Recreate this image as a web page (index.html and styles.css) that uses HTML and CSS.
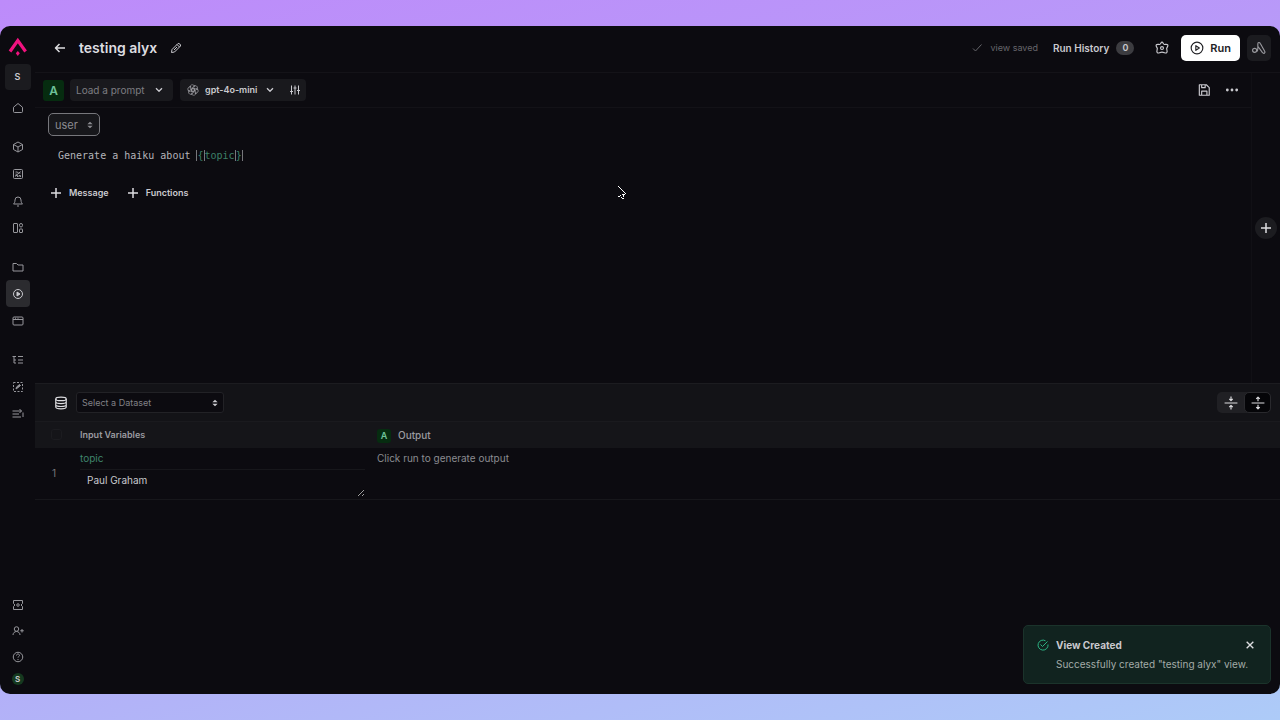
FILE: index.html
```html
<!DOCTYPE html>
<html lang="en">
<head>
    <meta charset="UTF-8">
    <meta name="viewport" content="width=device-width, initial-scale=1.0">
    <title>testing alyx</title>
    <link rel="stylesheet" href="styles.css">
</head>
<body>
<div class="window">
    <aside class="sidebar">
        <a class="logo" href="#" aria-label="Home page">
            <svg width="20" height="20" viewBox="0 0 20 20"><path d="M2 14.500 9.800 3.500l7.800 11" fill="none" stroke="#f0127f" stroke-width="3.200"/><path d="M9.800 14l2 2.200-2 2.800-2-2.800z" fill="#f0127f"/></svg>
        </a>
        <button class="space" type="button">S</button>
        <nav class="side_nav">
            <div class="side_group">
                <a href="#" aria-label="Home"><svg class="icon" viewBox="0 0 24 24"><path d="M3 10.500 12 3l9 7.500V19a2 2 0 0 1-2 2H5a2 2 0 0 1-2-2z"/></svg></a>
            </div>
            <div class="side_group">
                <a href="#" aria-label="Models"><svg class="icon" viewBox="0 0 24 24"><path d="M12 2l9 5v10l-9 5-9-5V7zM3 7l9 5 9-5M12 12v10"/></svg></a>
                <a href="#" aria-label="Dashboards"><svg class="icon" viewBox="0 0 24 24"><rect x="3" y="3" width="18" height="18" rx="2"/><path d="M7 8h4l2 3 4-4M7 12l4 1 2-3h4M7 17v-2h4v3M14 18v-3h3v3"/></svg></a>
                <a href="#" aria-label="Monitors"><svg class="icon" viewBox="0 0 24 24"><path d="M3 18c2-2 3-4 3-8a6 6 0 0 1 12 0c0 4 1 6 3 8zM10 22h4"/></svg></a>
                <a href="#" aria-label="Boards"><svg class="icon" viewBox="0 0 24 24"><rect x="3" y="3" width="8" height="18" rx="1"/><rect x="15" y="3" width="6" height="7" rx="3"/><rect x="15" y="14" width="6" height="7" rx="1"/></svg></a>
            </div>
            <div class="side_group">
                <a href="#" aria-label="Projects"><svg class="icon" viewBox="0 0 24 24"><path d="M2 5h7l3 3h10v12H2z"/></svg></a>
                <a class="active" href="#" aria-label="Playground"><svg class="icon" viewBox="0 0 24 24"><circle cx="12" cy="12" r="9"/><path d="M10 8l6 4-6 4z" fill="currentColor"/></svg></a>
                <a href="#" aria-label="Prompts"><svg class="icon" viewBox="0 0 24 24"><rect x="2" y="4" width="20" height="16" rx="2"/><path d="M2 9h20M6 6.500h2M11 6.500h2"/></svg></a>
            </div>
            <div class="side_group">
                <a href="#" aria-label="Traces"><svg class="icon" viewBox="0 0 24 24"><path d="M1 5h7M4 5v13h4M12 5h10M12 12h10M12 18h10M4 12h4"/></svg></a>
                <a href="#" aria-label="Annotations"><svg class="icon" viewBox="0 0 24 24"><rect x="3" y="3" width="18" height="18" stroke-dasharray="4 3"/><path d="M8 16l1-4 6-5 2 2-6 5z" fill="currentColor"/></svg></a>
                <a href="#" aria-label="Tasks"><svg class="icon" viewBox="0 0 24 24"><path d="M1 6h18M1 12h13M1 18h17M15 2l4 4-4 4M22 9v9"/></svg></a>
            </div>
        </nav>
        <div class="side_bottom">
            <a href="#" aria-label="Billing"><svg class="icon" viewBox="0 0 24 24"><path d="M3 3h18v6l-3 3 3 3v6H3v-6l3-3-3-3z"/><circle cx="12" cy="12" r="2.500"/></svg></a>
            <a href="#" aria-label="Invite"><svg class="icon" viewBox="0 0 24 24"><circle cx="9" cy="8" r="4.500"/><path d="M2 20c0-4 3-7 7-7s7 3 7 7M20 8v7M16.500 11.500h7"/></svg></a>
            <a href="#" aria-label="Help"><svg class="icon" viewBox="0 0 24 24"><circle cx="12" cy="12" r="9.500"/><path d="M9 9c0-4 6-4 6 0 0 2-3 2-3 4M12 16v2"/></svg></a>
            <button class="avatar" type="button">S</button>
        </div>
    </aside>

    <main class="main">
        <header class="header">
            <button class="plain" type="button" aria-label="Back"><svg class="icon bright thick" viewBox="0 0 24 24"><path d="M22 12H3M11 4l-8 8 8 8"/></svg></button>
            <h1>testing alyx</h1>
            <button class="plain" type="button" aria-label="Rename"><svg class="icon" viewBox="0 0 24 24"><path d="M3 21l1-6L16 3c2-1 6 2 5 5L9 20zM14 5l5 5M8 16l6-6"/></svg></button>
            <div class="header_right">
                <span class="saved"><svg class="icon" viewBox="0 0 24 24"><path d="M4 13l5 5L21 5"/></svg>view saved</span>
                <button class="plain history" type="button">Run History <span class="count">0</span></button>
                <button class="plain" type="button" aria-label="Settings"><svg class="icon big" viewBox="0 0 24 24"><path d="M12 2c2 0 2 4 4 4s5-1 6 1-2 4-2 6 2 5 0 7-4-1-8-1-6 3-8 1 0-5 0-7-3-4-2-6 4-1 6-1 2-4 4-4z"/><circle cx="12" cy="12" r="2.500"/></svg></button>
                <button class="run" type="button"><svg class="icon big" viewBox="0 0 24 24"><circle cx="12" cy="12" r="10"/><path d="M10 8l6 4-6 4z"/></svg>Run</button>
                <button class="alyx" type="button" aria-label="Alyx"><svg class="icon big" viewBox="0 0 24 24"><circle cx="4.500" cy="16" r="3.500"/><path d="M8 18c2-1 2-3 2-5V5c0-3 3-3 4-1l8 14c1 3-2 4-4 2l-8-11"/></svg></button>
            </div>
        </header>

        <section class="top_pane">
            <div class="prompt">
                <div class="prompt_bar">
                    <span class="tag">A</span>
                    <label class="pick load">
                        <select aria-label="Prompt"><option>Load a prompt</option></select>
                        <svg class="icon small" viewBox="0 0 24 24"><path d="M3 7l9 9 9-9"/></svg>
                    </label>
                    <div class="model">
                        <svg class="icon openai" viewBox="0 0 24 24"><g id="petals"><path id="petal" d="M6 8.500V6a4.500 4.500 0 0 1 7-3.700 4.500 4.500 0 0 1 3 2.200L9.500 8.300v7.400"/><use href="#petal" transform="rotate(60 12 12)"/><use href="#petal" transform="rotate(120 12 12)"/></g><use href="#petals" transform="rotate(180 12 12)"/></svg>
                        <label class="pick model_pick">
                            <select aria-label="Model"><option>gpt-4o-mini</option></select>
                            <svg class="icon small" viewBox="0 0 24 24"><path d="M3 7l9 9 9-9"/></svg>
                        </label>
                        <button class="plain" type="button" aria-label="Parameters"><svg class="icon" viewBox="0 0 24 24"><path d="M5 3v18M12 3v18M19 3v18M2 15h6M9 8h6M16 13h6"/></svg></button>
                    </div>
                    <div class="bar_right">
                        <button class="plain" type="button" aria-label="Save"><svg class="icon big" viewBox="0 0 24 24"><path d="M4 3h12l5 5v13H4zM8 3v5h6V3M8 21v-7h9v7"/></svg></button>
                        <button class="plain" type="button" aria-label="More"><svg class="icon big" viewBox="0 0 24 24"><g fill="currentColor" stroke="none"><circle cx="4" cy="12" r="2.400"/><circle cx="12" cy="12" r="2.400"/><circle cx="20" cy="12" r="2.400"/></g></svg></button>
                    </div>
                </div>
                <div class="message">
                    <label class="pick role">
                        <select aria-label="Role"><option>user</option></select>
                        <svg class="icon updown" viewBox="0 0 24 24"><path d="M4 10l8-8 8 8zM4 14l8 8 8-8z"/></svg>
                    </label>
                    <div class="editor" contenteditable="true" spellcheck="false" role="textbox" aria-label="Message">Generate a haiku about <span class="brace">{</span><span class="var">topic</span><span class="brace">}</span></div>
                    <div class="add">
                        <button class="plain" type="button"><svg class="icon bright thick" viewBox="0 0 24 24"><path d="M12 2v20M2 12h20"/></svg>Message</button>
                        <button class="plain" type="button"><svg class="icon bright thick" viewBox="0 0 24 24"><path d="M12 2v20M2 12h20"/></svg>Functions</button>
                    </div>
                </div>
            </div>
            <div class="add_prompt">
                <button type="button" aria-label="Add prompt"><svg class="icon bright thick" viewBox="0 0 24 24"><path d="M12 2v20M2 12h20"/></svg></button>
            </div>
        </section>

        <section class="data_pane">
            <div class="data_bar">
                <svg class="icon big bright" viewBox="0 0 24 24"><ellipse cx="12" cy="5" rx="9" ry="3"/><path d="M3 5v14c0 4 18 4 18 0V5M3 10c0 4 18 4 18 0M3 15c0 4 18 4 18 0"/></svg>
                <label class="pick dataset">
                    <select aria-label="Dataset"><option>Select a Dataset</option></select>
                    <svg class="icon updown" viewBox="0 0 24 24"><path d="M4 10l8-8 8 8zM4 14l8 8 8-8z"/></svg>
                </label>
                <div class="toggle">
                    <button type="button" aria-label="Collapse rows"><svg class="icon big bright" viewBox="0 0 24 24"><path d="M1 12h22M12 1v7M12 16v7M9 5l3 3 3-3M9 19l3-3 3 3"/></svg></button>
                    <button class="on" type="button" aria-label="Expand rows"><svg class="icon big bright" viewBox="0 0 24 24"><path d="M1 12h22M12 2v7M12 15v7M9 5l3-3 3 3M9 19l3 3 3-3"/></svg></button>
                </div>
            </div>
            <table class="grid">
                <thead>
                    <tr>
                        <th class="col_num"><input type="checkbox" aria-label="Select all"></th>
                        <th class="col_vars">Input Variables</th>
                        <th class="col_out"><span class="tag tag_small">A</span>Output</th>
                    </tr>
                </thead>
                <tbody>
                    <tr>
                        <td class="num">1</td>
                        <td>
                            <label class="topic" for="topic">topic</label>
                            <textarea id="topic">Paul Graham</textarea>
                        </td>
                        <td class="out">Click run to generate output</td>
                    </tr>
                </tbody>
            </table>
        </section>
    </main>

    <div class="toast" role="status">
        <svg class="icon toast_icon" viewBox="0 0 24 24"><path d="M17 3.500A10 10 0 1 0 22 11M7 11l4 4L21 5"/></svg>
        <div class="toast_text">
            <strong>View Created</strong>
            <p>Successfully created "testing alyx" view.</p>
        </div>
        <button class="plain" type="button" aria-label="Close"><svg class="icon small bright" viewBox="0 0 24 24"><path d="M2 2l20 20M22 2L2 22"/></svg></button>
    </div>

    <svg class="pointer" viewBox="0 0 8 13" shape-rendering="crispEdges"><path d="M0 0h1v1H0zM1 1h1v1H1zM2 2h1v1H2zM3 3h1v1H3zM4 4h1v1H4zM5 5h1v1H5zM6 6h1v1H6zM7 7h1v1H7zM4 8h3v1H4zM2 9h1v1H2zM5 9h1v1H5zM0 10h2v1H0zM3 11h1v1H3zM5 10h1v1H5zM4 12h2v1H4z" fill="#fff"/></svg>
</div>
</body>
</html>
```
FILE: styles.css
```css
*{
    box-sizing:border-box;
}

body{
    margin:0;
    min-height:100vh;
    padding:26px 0;
    display:flex;
    background:linear-gradient(165deg,#bd8bfa 0%,#b79cf8 40%,#adcbf8 100%);
    color:#c9c9ce;
    font-family:Inter,"Liberation Sans",sans-serif;
    font-size:10px;
    line-height:16px;
}

button,select,textarea{
    font:inherit;
    color:inherit;
    border:0;
    padding:0;
    background:none;
}

.window{
    position:relative;
    flex:1;
    display:flex;
    background:#0c0b10;
    border-radius:10px;
    overflow:hidden;
}

/* icons */
.icon{
    width:12px;
    height:12px;
    flex:none;
    display:block;
    fill:none;
    stroke:currentColor;
    stroke-width:2;
    stroke-linejoin:round;
}

.small{
    width:8px;
    height:8px;
    stroke-width:4;
}

.big{
    width:14px;
    height:14px;
}

.bright{
    color:#dddde0;
}

.thick{
    stroke-width:3;
}

.updown{
    width:8px;
    height:10px;
    fill:currentColor;
    stroke:none;
}

.plain{
    display:flex;
    align-items:center;
}

/* sidebar */
.sidebar{
    width:35px;
    padding:11px 0 9px;
    display:flex;
    flex-direction:column;
    align-items:center;
    color:#97979c;
}

.logo svg{
    display:block;
}

.space{
    width:26px;
    height:26px;
    margin:7px 0 4px;
    background:#1b1b1f;
    border-radius:4px;
    color:#c9c9ce;
    font-size:9px;
    font-weight:600;
}

.side_nav{
    display:flex;
    flex-direction:column;
    gap:12px;
}

.side_group a{
    width:24px;
    height:27px;
    display:flex;
    align-items:center;
    justify-content:center;
    color:inherit;
    border-radius:4px;
}

.side_group .active{
    background:#2b2b2f;
    color:#c9c9ce;
}

.side_bottom{
    margin-top:auto;
    display:flex;
    flex-direction:column;
    align-items:center;
    gap:14px;
}

.side_bottom a{
    color:inherit;
}

.avatar{
    width:12px;
    height:12px;
    margin-top:-4px;
    border-radius:50%;
    background:#15391f;
    color:#c9c9ce;
    font-size:8px;
    line-height:12px;
    font-weight:600;
}

/* header */
.main{
    flex:1;
    min-width:0;
    display:flex;
    flex-direction:column;
}

.header{
    height:46px;
    padding:0 9px 2px 19px;
    display:flex;
    align-items:center;
    gap:13px;
}

h1{
    margin:0;
    color:#dddde0;
    font-size:14px;
    line-height:20px;
    font-weight:600;
}

.header_right{
    margin-left:auto;
    display:flex;
    align-items:center;
}

.saved{
    display:flex;
    align-items:center;
    gap:7px;
    color:#66666b;
    font-size:9px;
}

.history{
    margin:0 21px 0 15px;
    gap:7px;
    font-weight:600;
}

.count{
    width:18px;
    height:14px;
    border-radius:7px;
    background:#3c3c40;
    font-size:9px;
    line-height:14px;
    text-align:center;
}

.run{
    height:26px;
    margin:0 7px 0 12px;
    padding:0 9px;
    display:flex;
    align-items:center;
    gap:6px;
    background:#fff;
    border-radius:5px;
    color:#222226;
    font-size:11px;
    font-weight:600;
}

.alyx{
    width:24px;
    height:26px;
    display:flex;
    align-items:center;
    justify-content:center;
    background:#1b1b1f;
    border-radius:5px;
    color:#97979c;
}

/* prompt editor */
.top_pane{
    flex:1;
    display:flex;
    border-top:1px solid #141318;
}

.prompt{
    flex:1;
    border-right:1px solid #111015;
}

.prompt_bar{
    height:35px;
    padding:0 12px 0 8px;
    display:flex;
    align-items:center;
    gap:6px;
    border-bottom:1px solid #131217;
}

.tag{
    width:21px;
    height:21px;
    border-radius:3px;
    background:#062c10;
    color:#6fc39a;
    font-size:12px;
    line-height:21px;
    font-weight:600;
    text-align:center;
}

.pick{
    display:flex;
    align-items:center;
    color:#c9c9ce;
}

.pick select{
    flex:1;
    min-width:0;
    appearance:none;
    outline:0;
}

.load{
    width:103px;
    height:22px;
    padding:0 10px 0 6px;
    background:#19191d;
    border-radius:4px;
}

.load select{
    color:#7d7d82;
}

.model{
    height:22px;
    margin-left:1px;
    padding:0 5px 0 7px;
    display:flex;
    align-items:center;
    gap:6px;
    background:#19191d;
    border-radius:4px;
}

.openai{
    stroke-width:1;
}

.model_pick{
    width:69px;
    margin-right:9px;
    font-size:9px;
    font-weight:600;
}

.bar_right{
    margin-left:auto;
    display:flex;
    gap:14px;
}

.message{
    padding:5px 13px;
}

.role{
    width:52px;
    height:23px;
    padding:0 5px 0 6px;
    background:#17171b;
    border:1px solid #77777c;
    border-radius:5px;
    color:#8b8b90;
    font-size:11px;
}

.editor{
    padding:12px 10px 11px;
    color:#b4b4b9;
    font-family:"DejaVu Sans Mono",monospace;
    font-size:10px;
    outline:0;
}

.brace{
    border:solid #77777c;
    border-width:0 1px;
    color:#3d8068;
}

.var{
    color:#3d8068;
}

.add{
    padding:10px 2px;
    display:flex;
    gap:18px;
    font-size:9px;
    font-weight:600;
}

.add button{
    gap:7px;
}

.add_prompt{
    width:28px;
    display:flex;
    align-items:center;
    justify-content:center;
}

.add_prompt button{
    width:22px;
    height:22px;
    display:flex;
    align-items:center;
    justify-content:center;
    border-radius:50%;
    background:#1c1c20;
}

/* dataset */
.data_pane{
    flex:1;
    border-top:1px solid #1c1c20;
}

.data_bar{
    height:37px;
    padding:0 9px 0 19px;
    display:flex;
    align-items:center;
    gap:8px;
    background:#131317;
}

.dataset{
    width:148px;
    height:21px;
    padding:0 4px 0 5px;
    background:#0c0b10;
    border:1px solid #222226;
    border-radius:3px;
    font-size:9px;
}

.dataset select{
    color:#818186;
}

.toggle{
    margin-left:auto;
    display:flex;
    background:#202024;
    border-radius:5px;
}

.toggle button{
    width:27px;
    height:21px;
    display:flex;
    align-items:center;
    justify-content:center;
    border-radius:5px;
}

.toggle .on{
    background:#050508;
    border:1px solid #29292d;
}

.grid{
    width:100%;
    border-collapse:collapse;
    table-layout:fixed;
}

.grid th{
    height:26px;
    padding:0;
    background:#151519;
    border-top:1px solid #1a1a1e;
    color:#9b9ba0;
    text-align:left;
    font-size:9px;
    font-weight:600;
}

.grid .col_num{
    width:45px;
    padding-left:16px;
}

.col_vars{
    width:297px;
}

.grid .col_out{
    font-size:10px;
    font-weight:500;
}

.col_num input{
    appearance:none;
    width:11px;
    height:11px;
    margin:0;
    display:block;
    border:1px solid #1c1c20;
    border-radius:3px;
}

.tag_small{
    display:inline-block;
    width:14px;
    height:14px;
    margin-right:7px;
    font-size:9px;
    line-height:14px;
}

.grid td{
    padding:2px 0;
    vertical-align:top;
    border-bottom:1px solid #17171b;
}

.grid .num{
    padding-left:17px;
    vertical-align:middle;
    color:#77777c;
}

.topic{
    display:block;
    margin-bottom:3px;
    color:#3f846c;
}

.grid textarea{
    width:285px;
    height:28px;
    padding:2px 7px;
    display:block;
    border-top:1px solid #17171b;
    resize:vertical;
    outline:0;
    overflow:hidden;
}

.out{
    color:#8b8b90;
}

/* toast */
.toast{
    position:absolute;
    right:9px;
    bottom:10px;
    width:248px;
    padding:11px 17px 11px 13px;
    display:flex;
    align-items:flex-start;
    gap:7px;
    background:#11231f;
    border:1px solid #1b332b;
    border-radius:5px;
}

.toast_icon{
    margin-top:2px;
    color:#2db484;
}

.toast_text{
    flex:1;
    white-space:nowrap;
}

.toast strong{
    display:block;
    font-weight:700;
}

.toast p{
    margin:3px 0 0;
    color:#a3aba8;
}

.toast button{
    position:absolute;
    top:15px;
    right:16px;
}

.pointer{
    position:absolute;
    left:618px;
    top:160px;
    width:8px;
    height:13px;
}
```
